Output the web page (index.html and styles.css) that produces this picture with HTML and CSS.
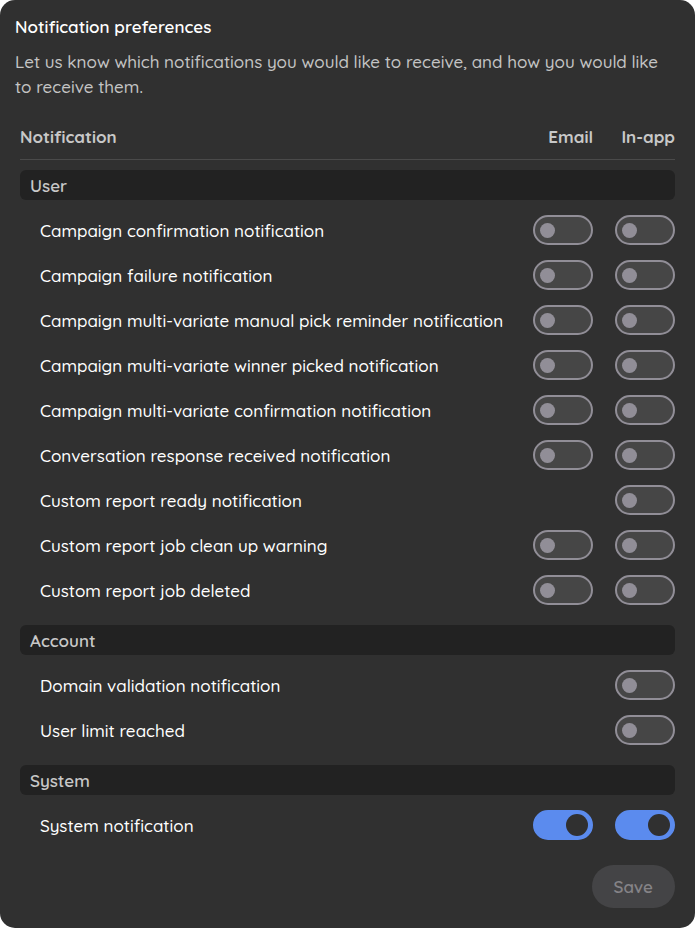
FILE: index.html
```html
<!DOCTYPE html>
<html lang="en">
  <head>
    <meta charset="UTF-8" />
    <meta name="viewport" content="width=device-width, initial-scale=1.0" />
    <title>Notification preferences</title>
    <link rel="stylesheet" href="styles.css">
  </head>
  <body>
    <form class="panel" id="preferences-form">
      <h1>Notification preferences</h1>
      <p class="intro">Let us know which notifications you would like to receive, and how you would like to receive them.</p>

      <table class="preferences">
        <thead>
          <tr>
            <th scope="col">Notification</th>
            <th scope="col" class="channel">Email</th>
            <th scope="col" class="channel">In-app</th>
          </tr>
        </thead>
        <tbody>
          <tr class="section">
            <th colspan="3" scope="rowgroup"><div class="section-title">User</div></th>
          </tr>
          <tr>
            <td>Campaign confirmation notification</td>
            <td class="channel"><input type="checkbox" class="toggle" aria-label="Campaign confirmation notification by email" /></td>
            <td class="channel"><input type="checkbox" class="toggle" aria-label="Campaign confirmation notification in-app" /></td>
          </tr>
          <tr>
            <td>Campaign failure notification</td>
            <td class="channel"><input type="checkbox" class="toggle" aria-label="Campaign failure notification by email" /></td>
            <td class="channel"><input type="checkbox" class="toggle" aria-label="Campaign failure notification in-app" /></td>
          </tr>
          <tr>
            <td>Campaign multi-variate manual pick reminder notification</td>
            <td class="channel"><input type="checkbox" class="toggle" aria-label="Campaign multi-variate manual pick reminder notification by email" /></td>
            <td class="channel"><input type="checkbox" class="toggle" aria-label="Campaign multi-variate manual pick reminder notification in-app" /></td>
          </tr>
          <tr>
            <td>Campaign multi-variate winner picked notification</td>
            <td class="channel"><input type="checkbox" class="toggle" aria-label="Campaign multi-variate winner picked notification by email" /></td>
            <td class="channel"><input type="checkbox" class="toggle" aria-label="Campaign multi-variate winner picked notification in-app" /></td>
          </tr>
          <tr>
            <td>Campaign multi-variate confirmation notification</td>
            <td class="channel"><input type="checkbox" class="toggle" aria-label="Campaign multi-variate confirmation notification by email" /></td>
            <td class="channel"><input type="checkbox" class="toggle" aria-label="Campaign multi-variate confirmation notification in-app" /></td>
          </tr>
          <tr>
            <td>Conversation response received notification</td>
            <td class="channel"><input type="checkbox" class="toggle" aria-label="Conversation response received notification by email" /></td>
            <td class="channel"><input type="checkbox" class="toggle" aria-label="Conversation response received notification in-app" /></td>
          </tr>
          <tr>
            <td>Custom report ready notification</td>
            <td class="channel"></td>
            <td class="channel"><input type="checkbox" class="toggle" aria-label="Custom report ready notification in-app" /></td>
          </tr>
          <tr>
            <td>Custom report job clean up warning</td>
            <td class="channel"><input type="checkbox" class="toggle" aria-label="Custom report job clean up warning by email" /></td>
            <td class="channel"><input type="checkbox" class="toggle" aria-label="Custom report job clean up warning in-app" /></td>
          </tr>
          <tr>
            <td>Custom report job deleted</td>
            <td class="channel"><input type="checkbox" class="toggle" aria-label="Custom report job deleted by email" /></td>
            <td class="channel"><input type="checkbox" class="toggle" aria-label="Custom report job deleted in-app" /></td>
          </tr>
        </tbody>
        <tbody>
          <tr class="section">
            <th colspan="3" scope="rowgroup"><div class="section-title">Account</div></th>
          </tr>
          <tr>
            <td>Domain validation notification</td>
            <td class="channel"></td>
            <td class="channel"><input type="checkbox" class="toggle" aria-label="Domain validation notification in-app" /></td>
          </tr>
          <tr>
            <td>User limit reached</td>
            <td class="channel"></td>
            <td class="channel"><input type="checkbox" class="toggle" aria-label="User limit reached in-app" /></td>
          </tr>
        </tbody>
        <tbody>
          <tr class="section">
            <th colspan="3" scope="rowgroup"><div class="section-title">System</div></th>
          </tr>
          <tr>
            <td>System notification</td>
            <td class="channel"><input type="checkbox" class="toggle" aria-label="System notification by email" checked /></td>
            <td class="channel"><input type="checkbox" class="toggle" aria-label="System notification in-app" checked /></td>
          </tr>
        </tbody>
      </table>

      <div class="actions">
        <button type="submit" class="save" disabled>Save</button>
      </div>
    </form>
  </body>
</html>
```

FILE: styles.css
```css
* {
  box-sizing: border-box;
}

body {
  margin: 0;
  background-color: #fff;
  color: #fff;
  font-family: Quicksand, Lato, sans-serif;
  font-size: 17px;
  font-weight: 500;
  line-height: 25px;
}

.panel {
  padding: 14px 20px 20px 15px;
  background-color: #303030;
  border-radius: 15px;
}

h1 {
  margin: 0 0 10px;
  font-size: 17px;
  font-weight: 600;
}

.intro {
  margin: 0;
  color: #c4c4c4;
}

.preferences {
  width: calc(100% - 5px);
  margin: 25px 0 0 5px;
  border-collapse: collapse;
}

.preferences th,
.preferences td {
  padding: 15px 0 0;
  text-align: left;
}

.preferences td:first-child {
  padding-left: 20px;
}

.preferences thead th {
  padding: 0 0 10px;
  border-bottom: 1px solid #4a4a4a;
  color: #c8c8c8;
  font-weight: bold;
}

.preferences .channel {
  width: 82px;
  text-align: right;
}

.preferences .section th {
  padding-top: 20px;
  font-weight: 600;
}

.preferences thead + tbody .section th {
  padding-top: 10px;
}

.section-title {
  height: 30px;
  padding: 0 10px;
  background-color: #222;
  border-radius: 6px;
  color: #c8c8c8;
  line-height: 32px;
}

.toggle {
  appearance: none;
  display: inline-flex;
  align-items: center;
  width: 60px;
  height: 30px;
  margin: 0;
  padding: 0 5px;
  background-color: #464646;
  border: 2px solid #918e97;
  border-radius: 15px;
  vertical-align: top;
  cursor: pointer;
}

.toggle::before {
  content: "";
  width: 15px;
  height: 15px;
  background-color: #918e97;
  border-radius: 50%;
}

.toggle:checked {
  justify-content: flex-end;
  padding: 0 3px;
  background-color: #5b8bee;
  border-color: #5b8bee;
}

.toggle:checked::before {
  width: 22px;
  height: 22px;
  background-color: #303030;
}

.actions {
  display: flex;
  justify-content: flex-end;
  margin-top: 25px;
}

.save {
  padding: 9px 22px;
  background-color: #444446;
  border: none;
  border-radius: 22px;
  color: #858387;
  font: inherit;
  font-weight: 600;
}
```
